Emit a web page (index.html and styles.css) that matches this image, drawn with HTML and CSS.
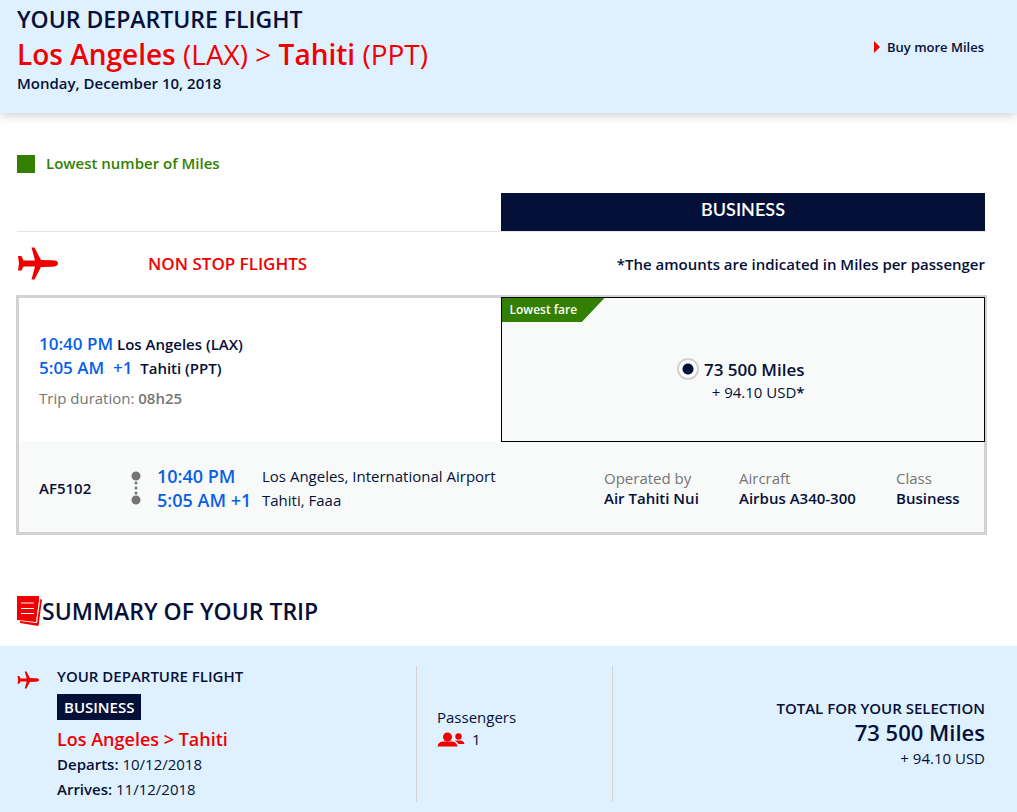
FILE: index.html
```html
<!DOCTYPE html>
<html lang="en">
<head>
    <meta charset="UTF-8">
    <meta name="viewport" content="width=device-width, initial-scale=1.0">
    <title>Your departure flight</title>
    <link rel="stylesheet" href="styles.css">
</head>
<body>

<svg class="sprite" aria-hidden="true">
    <symbol id="plane" viewBox="0 0 41 33">
        <path d="M1 9h3.500l2 4.500L18 13.500 14.500.5h3L24 13l11 .3c4 0 6 1.200 6 3.200s-2 3.200-6 3.200L24 20l-6.500 12.500h-3L18 19.500 6.500 19.500l-2 4H1l1-7z"/>
    </symbol>
</svg>

<header class="flight-header">
    <div>
        <h1>YOUR DEPARTURE FLIGHT</h1>
        <p class="route">Los Angeles <span>(LAX) &gt;</span> Tahiti <span>(PPT)</span></p>
        <p class="date">Monday, December 10, 2018</p>
    </div>
    <a class="buy-miles" href="#">Buy more Miles</a>
</header>

<main class="flights">
    <p class="legend">Lowest number of Miles</p>

    <div class="cabins">
        <h2 class="cabin">BUSINESS</h2>
    </div>

    <div class="stops">
        <svg class="stops-icon"><use href="#plane"/></svg>
        <h2>NON STOP FLIGHTS</h2>
        <p>*The amounts are indicated in Miles per passenger</p>
    </div>

    <section class="card">
        <div class="offer">
            <div class="offer-times">
                <p><b class="time">10:40 PM</b> Los Angeles (LAX)</p>
                <p><b class="time">5:05 AM&nbsp; +1</b>&nbsp; Tahiti (PPT)</p>
                <p class="duration">Trip duration: <b>08h25</b></p>
            </div>
            <div class="fare">
                <span class="fare-tag">Lowest fare</span>
                <input type="radio" name="fare" id="fare-business" checked>
                <label for="fare-business">
                    <b>73 500 Miles</b>
                    <span>+ 94.10 USD<b>*</b></span>
                </label>
            </div>
        </div>
        <div class="segment">
            <b class="flight-number">AF5102</b>
            <svg class="stopline" viewBox="0 0 10 36">
                <circle cx="5" cy="6" r="4.500"/>
                <circle cx="5" cy="13" r="1.500"/>
                <circle cx="5" cy="18" r="1.500"/>
                <circle cx="5" cy="23" r="1.500"/>
                <circle cx="5" cy="30" r="4.500"/>
            </svg>
            <div class="segment-times time">
                <p>10:40 PM</p>
                <p>5:05 AM +1</p>
            </div>
            <div class="airports">
                <p>Los Angeles, International Airport</p>
                <p>Tahiti, Faaa</p>
            </div>
            <dl><dt>Operated by</dt><dd>Air Tahiti Nui</dd></dl>
            <dl><dt>Aircraft</dt><dd>Airbus A340-300</dd></dl>
            <dl><dt>Class</dt><dd>Business</dd></dl>
        </div>
    </section>
</main>

<div class="summary-title">
    <svg viewBox="0 0 25 31">
        <path d="M0 0h22v5L19 26 0 24z"/>
        <path d="M3 25l16 2L23 3l2 .5L21.500 30 3 27z"/>
        <path class="line" d="M19.500 27L23 2M4 7h13M4 12.500h13M4 17.500h13"/>
    </svg>
    <h2>SUMMARY OF YOUR TRIP</h2>
</div>

<section class="summary">
    <div class="trip">
        <svg class="trip-icon"><use href="#plane"/></svg>
        <div>
            <h3>YOUR DEPARTURE FLIGHT</h3>
            <span class="badge">BUSINESS</span>
            <p class="trip-route">Los Angeles &gt; Tahiti</p>
            <p><b>Departs:</b> 10/12/2018</p>
            <p><b>Arrives:</b> 11/12/2018</p>
        </div>
    </div>
    <div class="passengers">
        <p>Passengers</p>
        <p class="count">
            <svg viewBox="0 0 28 15">
                <circle cx="10.500" cy="5" r="4.500"/>
                <path d="M.5 14.500c.5-4 3.500-5 6-5h8c3 0 5.500 1.500 6 5z"/>
                <circle cx="21.500" cy="4.500" r="3.200"/>
                <path d="M17.500 8.500h6c2 0 3.500 1.500 4 3.500h-6c-1-1.500-2-2.500-4-3.500z"/>
            </svg>
            1
        </p>
    </div>
    <div class="total">
        <h3>TOTAL FOR YOUR SELECTION</h3>
        <p class="total-miles">73 500 Miles</p>
        <p>+ 94.10 USD</p>
    </div>
</section>

</body>
</html>
```

FILE: styles.css
```css
* {
    box-sizing: border-box;
}
body {
    margin: 0;
    font-family: "Open Sans", sans-serif;
    font-size: 15px;
    line-height: 24px;
    color: #051039;
    background: #fff;
}
h1, h2, h3, p, dl, dd {
    margin: 0;
    font-weight: inherit;
}
b, h1, h2, h3, dd {
    font-weight: 600;
}
.sprite {
    display: none;
}
svg {
    fill: #f00000;
    flex: none;
}
.time {
    font-size: 18px;
    font-weight: 600;
    color: #0a5fe8;
}

/* header */
.flight-header {
    display: flex;
    justify-content: space-between;
    align-items: flex-start;
    padding: 4px 33px 21px 17px;
    background: #dff1ff;
    box-shadow: 0 2px 10px rgba(0, 0, 0, 0.2);
}
.flight-header h1 {
    font-size: 23px;
    line-height: 30px;
}
.route {
    font-size: 28px;
    line-height: 40px;
    font-weight: 600;
    color: #f00000;
}
.route span {
    font-weight: 400;
}
.date {
    line-height: 18px;
    font-weight: 600;
}
.buy-miles {
    display: flex;
    align-items: center;
    gap: 7px;
    margin-top: 31px;
    font-size: 13px;
    font-weight: 600;
    color: #051039;
    text-decoration: none;
}
.buy-miles::before {
    content: "";
    border: 6px solid transparent;
    border-left-color: #f00000;
    border-right: 0;
}

/* flight list */
.flights {
    padding: 41px 30px 0 16px;
}
.legend {
    display: flex;
    align-items: center;
    gap: 11px;
    padding-left: 1px;
    line-height: 19px;
    font-weight: 600;
    color: #338000;
}
.legend::before {
    content: "";
    width: 18px;
    height: 18px;
    background: #338000;
}
.cabins {
    display: flex;
    justify-content: flex-end;
    margin: 20px 2px 0 1px;
    border-bottom: 1px solid #e5e5e5;
}
.cabin {
    width: 50%;
    padding-bottom: 6px;
    font-family: Lato, sans-serif;
    font-size: 18px;
    line-height: 32px;
    text-align: center;
    color: #fff;
    background: #051039;
}
.stops {
    display: flex;
    align-items: center;
    height: 63px;
    padding: 0 2px 0 1px;
    font-weight: 600;
}
.stops-icon {
    width: 41px;
    height: 33px;
    margin-right: 90px;
}
.stops h2 {
    flex: 1;
    font-size: 17px;
    color: #f00000;
}
.card {
    border: 3px solid #d2d2d2;
}
.offer {
    display: flex;
    height: 143px;
}
.offer-times {
    flex: 1;
    align-self: center;
    padding-left: 20px;
    line-height: 23px;
    font-weight: 600;
}
.offer-times .time {
    font-size: 17px;
}
.duration {
    margin-top: 8px;
    line-height: 20px;
    font-weight: 400;
    color: #757575;
}
.fare {
    position: relative;
    display: flex;
    justify-content: center;
    align-items: center;
    gap: 5px;
    width: calc(50% + 2px);
    margin: -1px;
    padding: 22px 4px 0 0;
    border: 1px solid #000;
    background: #f8faf9;
}
.fare-tag {
    position: absolute;
    top: 0;
    left: 0;
    width: 103px;
    padding-left: 8px;
    font-size: 12px;
    font-weight: 600;
    color: #fff;
    background: #338000;
    clip-path: polygon(0 0, 100% 0, 78% 100%, 0 100%);
}
.fare input {
    appearance: none;
    align-self: flex-start;
    width: 22px;
    height: 22px;
    margin: 38px 0 0;
    border: 2px solid #d2d2d2;
    border-radius: 50%;
    background: radial-gradient(circle, #051039 5px, #fff 6px);
}
.fare label {
    display: flex;
    flex-direction: column;
    line-height: 22px;
    text-align: right;
}
.fare label > b {
    font-size: 17px;
}
.segment {
    display: grid;
    grid-template-columns: 92px 26px 105px 1fr 135px 157px 88px;
    align-items: center;
    height: 91px;
    padding: 3px 0 0 20px;
    background: #f8faf9;
}
.stopline {
    width: 10px;
    height: 36px;
    fill: #757575;
}
.segment dl {
    line-height: 20px;
}
.segment dt {
    color: #757575;
}

/* summary */
.summary-title {
    display: flex;
    align-items: center;
    padding: 60px 17px 19px;
}
.summary-title svg {
    width: 25px;
    height: 31px;
}
.summary-title .line {
    fill: none;
    stroke: #fff;
}
.summary-title h2 {
    font-size: 23px;
    line-height: 32px;
}
.summary {
    display: grid;
    grid-template-columns: 400fr 196fr 372fr;
    padding: 20px 32px 11px 17px;
    background: #dff1ff;
}
.summary h3 {
    font-size: 15px;
    line-height: 20px;
}
.trip, .passengers {
    border-right: 1px solid #d2d2d2;
}
.trip {
    display: flex;
    gap: 18px;
}
.trip-icon {
    width: 22px;
    height: 18px;
    margin-top: 5px;
}
.badge {
    display: table;
    margin: 8px 0 6px;
    padding: 0 7px;
    font-weight: 600;
    line-height: 26px;
    color: #fff;
    background: #051039;
}
.trip-route {
    font-size: 18px;
    line-height: 26px;
    font-weight: 600;
    color: #f00000;
}
.trip-route ~ p {
    line-height: 25px;
}
.passengers {
    padding: 40px 20px 0;
    line-height: 22px;
}
.count {
    display: flex;
    align-items: center;
    gap: 7px;
}
.count svg {
    width: 28px;
    height: 15px;
}
.total {
    padding-top: 32px;
    text-align: right;
}
.total-miles {
    font-size: 22px;
    line-height: 28px;
    font-weight: 600;
}
```
